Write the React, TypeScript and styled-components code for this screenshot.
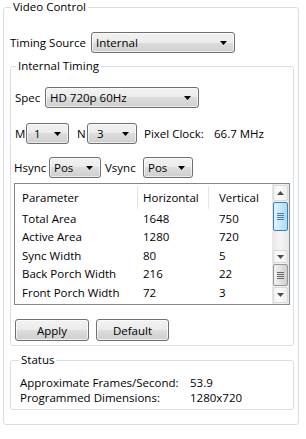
import React from "react";
import styled, { createGlobalStyle } from "styled-components";

const Global = createGlobalStyle`
  html, body { margin: 0; padding: 0; background: #ffffff; }
  body {
    font-family: "Segoe UI", "Open Sans", "Noto Sans", sans-serif;
    font-size: 11.5px;
    color: #000000;
  }
  * { box-sizing: border-box; }
`;

const Page = styled.div`
  width: 306px;
  height: 439px;
  padding-left: 3px;
  overflow: hidden;
`;

const Group = styled.fieldset<{ $pad: string; $mt?: number; $w: number }>`
  margin: ${(p) => p.$mt ?? 0}px 0 0 0;
  padding: ${(p) => p.$pad};
  width: ${(p) => p.$w}px;
  min-width: 0;
  border: 1px solid #d5dfe5;
  border-radius: 3px;
  display: flex;
  flex-direction: column;
`;

const Legend = styled.legend<{ $ml: number }>`
  margin-left: ${(p) => p.$ml}px;
  padding: 0 2px;
  line-height: 14px;
  height: 14px;
`;

const Row = styled.div<{ $mt?: number }>`
  display: flex;
  align-items: center;
  height: 21px;
  margin-top: ${(p) => p.$mt ?? 0}px;
`;

const Label = styled.span<{ $w: number; $ml?: number }>`
  width: ${(p) => p.$w}px;
  margin-left: ${(p) => p.$ml ?? 0}px;
  white-space: nowrap;
  flex: none;
`;

const ComboBox = styled.div<{ $w: number; $pl?: number }>`
  width: ${(p) => p.$w}px;
  height: 21px;
  flex: none;
  display: flex;
  align-items: center;
  justify-content: space-between;
  padding: 0 7px 0 ${(p) => p.$pl ?? 4}px;
  border: 1px solid #707070;
  border-radius: 3px;
  background: linear-gradient(#f2f2f2 0%, #ebebeb 50%, #dddddd 50%, #cfcfcf 100%);
  box-shadow: inset 0 0 0 1px rgba(255, 255, 255, 0.6);
  white-space: nowrap;
`;

const ArrowDown = () => (
  <svg width="7" height="4" viewBox="0 0 7 4">
    <path d="M0 0 H7 L3.5 4 Z" fill="#000" />
  </svg>
);

const Combo = ({ w, pl, value }: { w: number; pl?: number; value: string }) => (
  <ComboBox $w={w} $pl={pl}>
    <span>{value}</span>
    <ArrowDown />
  </ComboBox>
);

const Table = styled.div`
  margin-top: 5px;
  width: 276px;
  height: 122px;
  border: 1px solid #828790;
  display: flex;
  background: #fff;
`;

const TableBody = styled.div`
  flex: 1;
  display: flex;
  flex-direction: column;
`;

const HeaderRow = styled.div`
  display: grid;
  grid-template-columns: 123px 71px 1fr;
  height: 25px;
  align-items: center;
  padding-top: 2px;
`;

const HeaderCell = styled.div<{ $pl: number; $sep?: boolean }>`
  padding-left: ${(p) => p.$pl}px;
  height: 100%;
  display: flex;
  align-items: center;
  border-right: ${(p) => (p.$sep ? "1px solid #e5e5e5" : "none")};
`;

const DataRow = styled.div`
  display: grid;
  grid-template-columns: 123px 71px 1fr;
  height: 18.5px;
  align-items: center;
`;

const Cell = styled.div<{ $pl: number }>`
  padding-left: ${(p) => p.$pl}px;
  white-space: nowrap;
`;

const ScrollBar = styled.div`
  width: 17px;
  flex: none;
  display: flex;
  flex-direction: column;
  background: linear-gradient(90deg, #e7e7e7, #f5f5f5 50%, #e7e7e7);
`;

const ScrollBtn = styled.div<{ $h: number }>`
  height: ${(p) => p.$h}px;
  margin: 1px 1px;
  border: 1px solid #dadada;
  border-radius: 2px;
  background: linear-gradient(90deg, #f3f3f3, #fcfcfc 50%, #ececec);
  display: flex;
  align-items: center;
  justify-content: center;
`;

const Thumb = styled.div<{ $h: number; $blue?: boolean }>`
  height: ${(p) => p.$h}px;
  margin: 0 1px;
  border: 1px solid ${(p) => (p.$blue ? "#3c7fb1" : "#979797")};
  border-radius: 2px;
  background: ${(p) =>
    p.$blue
      ? "linear-gradient(90deg, #e3f4fc, #c4e8fb 50%, #a9dbf6)"
      : "linear-gradient(90deg, #f2f2f2, #e2e2e2 50%, #cfcfcf)"};
  display: flex;
  align-items: center;
  justify-content: center;
`;

const Track = styled.div<{ $h: number }>`
  height: ${(p) => p.$h}px;
`;

const Grip = ({ blue }: { blue?: boolean }) => (
  <svg width="7" height="7" viewBox="0 0 7 7">
    {[0.5, 2.5, 4.5, 6.5].map((y) => (
      <line key={y} x1="0" x2="7" y1={y} y2={y} stroke={blue ? "#4a7fa8" : "#666"} strokeWidth="1" />
    ))}
  </svg>
);

const SArrow = ({ up }: { up?: boolean }) => (
  <svg width="7" height="4" viewBox="0 0 7 4">
    <path d={up ? "M0 4 H7 L3.5 0 Z" : "M0 0 H7 L3.5 4 Z"} fill="#4d4d4d" />
  </svg>
);

const ButtonRow = styled.div`
  display: flex;
  gap: 7px;
  margin: 14px 0 0 1px;
`;

const Button = styled.div<{ $w: number }>`
  width: ${(p) => p.$w}px;
  height: 22px;
  border: 1px solid #707070;
  border-radius: 3px;
  background: linear-gradient(#f2f2f2 0%, #ebebeb 50%, #dddddd 50%, #cfcfcf 100%);
  box-shadow: inset 0 0 0 1px rgba(255, 255, 255, 0.7);
  display: flex;
  align-items: center;
  justify-content: center;
`;

const StatusLine = styled.div`
  display: flex;
  align-items: center;
  height: 15px;
  line-height: 15px;
  white-space: nowrap;
`;

const StatusKey = styled.span`
  width: 170px;
  flex: none;
`;

const rows = [
  ["Total Area", "1648", "750"],
  ["Active Area", "1280", "720"],
  ["Sync Width", "80", "5"],
  ["Back Porch Width", "216", "22"],
  ["Front Porch Width", "72", "3"],
];

export default function App() {
  return (
    <>
      <Global />
      <Page>
        <Group $w={296} $pad="18px 4px 14px 6px">
          <Legend $ml={1}>Video Control</Legend>
          <Row>
            <Label $w={81}>Timing Source</Label>
            <Combo w={144} value="Internal" />
          </Row>

          <Group $w={284} $mt={6} $pad="14px 3px 4px 3px">
            <Legend $ml={2}>Internal Timing</Legend>
            <Row>
              <Label $w={30} $ml={1}>Spec</Label>
              <Combo w={154} value="HD 720p 60Hz" />
            </Row>
            <Row $mt={15}>
              <Label $w={11} $ml={1}>M</Label>
              <Combo w={43} pl={7} value="1" />
              <Label $w={10} $ml={8}>N</Label>
              <Combo w={50} pl={9} value="3" />
              <Label $w={70} $ml={7}>Pixel Clock:</Label>
              <span>66.7 MHz</span>
            </Row>
            <Row $mt={13}>
              <Label $w={35}>Hsync</Label>
              <Combo w={52} value="Pos" />
              <Label $w={38} $ml={4}>Vsync</Label>
              <Combo w={50} value="Pos" />
            </Row>

            <Table>
              <TableBody>
                <HeaderRow>
                  <HeaderCell $pl={7} $sep>Parameter</HeaderCell>
                  <HeaderCell $pl={5} $sep>Horizontal</HeaderCell>
                  <HeaderCell $pl={10}>Vertical</HeaderCell>
                </HeaderRow>
                {rows.map((r) => (
                  <DataRow key={r[0]}>
                    <Cell $pl={7}>{r[0]}</Cell>
                    <Cell $pl={5}>{r[1]}</Cell>
                    <Cell $pl={10}>{r[2]}</Cell>
                  </DataRow>
                ))}
              </TableBody>
              <ScrollBar>
                <ScrollBtn $h={16}>
                  <SArrow up />
                </ScrollBtn>
                <Thumb $h={29} $blue>
                  <Grip blue />
                </Thumb>
                <Track $h={18} />
                <ScrollBtn $h={13}>
                  <SArrow />
                </ScrollBtn>
                <Thumb $h={22}>
                  <Grip />
                </Thumb>
                <ScrollBtn $h={16}>
                  <SArrow />
                </ScrollBtn>
              </ScrollBar>
            </Table>

            <ButtonRow>
              <Button $w={74}>Apply</Button>
              <Button $w={73}>Default</Button>
            </ButtonRow>
          </Group>

          <Group $w={284} $mt={7} $pad="8px 3px 4px 9px">
            <Legend $ml={-1}>Status</Legend>
            <StatusLine>
              <StatusKey>Approximate Frames/Second:</StatusKey>
              <span>53.9</span>
            </StatusLine>
            <StatusLine>
              <StatusKey>Programmed Dimensions:</StatusKey>
              <span>1280x720</span>
            </StatusLine>
          </Group>
        </Group>
      </Page>
    </>
  );
}
